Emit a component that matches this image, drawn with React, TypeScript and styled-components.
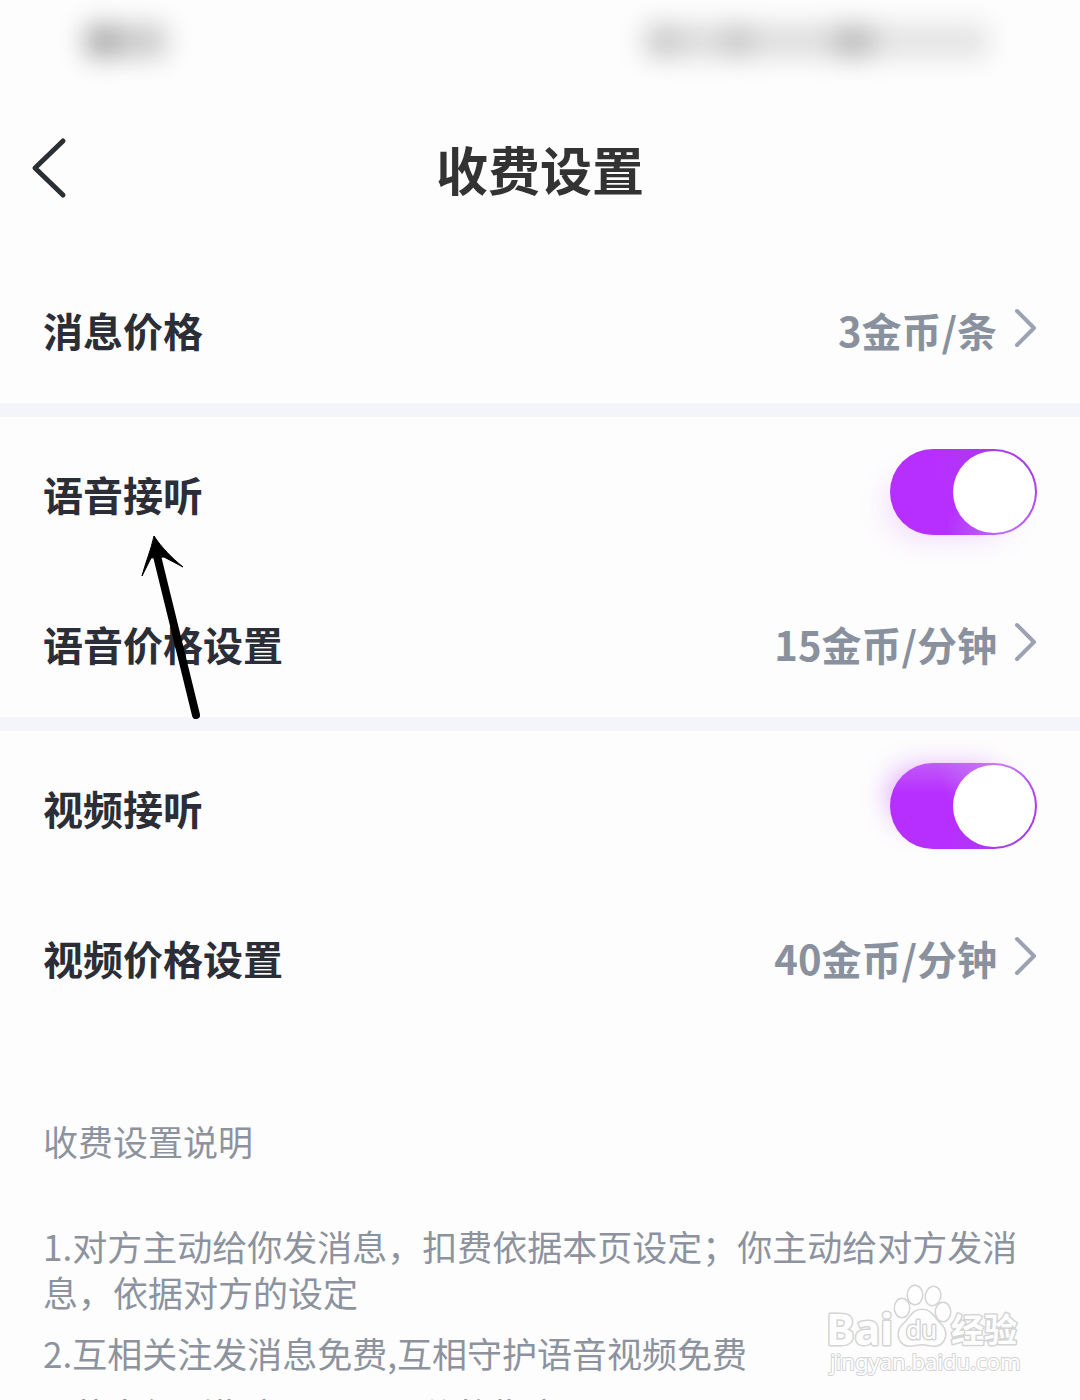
import React, { useState } from 'react';
import styled, { createGlobalStyle } from 'styled-components';

const GlobalStyle = createGlobalStyle`
  * { box-sizing: border-box; }
  body {
    margin: 0;
    background: #fdfdfd;
    font-family: "Noto Sans CJK SC", "Noto Sans", sans-serif;
    color: #2b2e37;
  }
  h1, h2, p { margin: 0; }
`;

const Page = styled.main`
  position: relative;
  height: 100vh;
  overflow: hidden;
`;

const StatusBar = styled.div`
  display: flex;
  justify-content: space-between;
  align-items: center;
  height: 82px;
  padding: 0 92px 0 86px;
`;

const StatusGroup = styled.div`
  display: flex;
  align-items: center;
  filter: blur(13px);
`;

const Smudge = styled.span<{ $w: number; $tone: string }>`
  width: ${p => p.$w}px;
  height: 32px;
  background: ${p => p.$tone};
`;

const TitleBar = styled.header`
  display: grid;
  grid-template-columns: 80px 1fr 80px;
  align-items: center;
  height: 171px;
`;

const BackButton = styled.button`
  display: flex;
  align-items: center;
  height: 80px;
  padding: 0 0 0 30px;
  border: 0;
  background: none;
  color: #2b2e33;
`;

const Title = styled.h1`
  padding-top: 2px;
  font-size: 52px;
  line-height: 72px;
  font-weight: 700;
  text-align: center;
  color: #333333;
`;

const Group = styled.section`
  & + & { border-top: 14px solid #f4f5fa; }
`;

const Row = styled.div`
  display: flex;
  justify-content: space-between;
  align-items: center;
  height: 150px;
  padding: 0 43px;
  font-size: 40px;
  line-height: 56px;
  font-weight: 700;
`;

const RowLabel = styled.label`
  padding-top: 4px;
`;

const RowText = styled.span`
  padding-top: 4px;
`;

const ValueButton = styled.button`
  display: flex;
  align-items: center;
  gap: 16px;
  padding: 0;
  border: 0;
  background: none;
  font: inherit;
  color: #8a919e;
`;

const Switch = styled.input<{ $glow: 'below' | 'above' }>`
  appearance: none;
  display: flex;
  width: 147px;
  height: 86px;
  margin: 0;
  padding: 2px;
  border-radius: 43px;
  background: #d5d8df;
  &::before {
    content: "";
    width: 82px;
    height: 82px;
    border-radius: 50%;
    background: #ffffff;
  }
  &:checked {
    justify-content: flex-end;
    background: ${p => p.$glow === 'below'
      ? 'radial-gradient(circle at 100% 0, #a144dc, transparent 60%), radial-gradient(circle at 85% 100%, #c679f4, transparent 45%), #b62fff'
      : 'radial-gradient(circle at 100% 100%, #a144dc, transparent 50%), radial-gradient(circle at 75% 0, #c679f4, transparent 45%), linear-gradient(#c25af8, transparent 35%), #b62fff'};
    box-shadow: ${p => p.$glow === 'below'
      ? '-14px 14px 32px -14px rgba(182, 47, 255, 0.2)'
      : '-16px -10px 26px -14px rgba(182, 47, 255, 0.4)'};
  }
`;

const Notes = styled.section`
  padding: 87px 43px 0;
  font-size: 35px;
  line-height: 46px;
  color: #8c939e;
`;

const NotesTitle = styled.h2`
  margin-bottom: 59px;
  font-size: 35px;
  line-height: 46px;
  font-weight: 400;
`;

const Note = styled.p`
  margin-bottom: 15px;
`;

const Pointer = styled.svg`
  position: absolute;
  left: 136px;
  top: 530px;
  pointer-events: none;
`;

const Watermark = styled.svg`
  position: absolute;
  right: 54px;
  top: 1280px;
  pointer-events: none;
`;

const Chevron = () => (
  <svg width="24" height="40" viewBox="0 0 24 40" fill="none" aria-hidden="true">
    <path d="M4 3 21 20 4 37" stroke="#9ba3b2" strokeWidth="4" strokeLinecap="round" strokeLinejoin="round" />
  </svg>
);

const PriceRow = ({ label, value }: { label: string; value: string }) => (
  <Row>
    <RowText>{label}</RowText>
    <ValueButton type="button" aria-label={label + ' ' + value}>
      <RowText>{value}</RowText>
      <Chevron />
    </ValueButton>
  </Row>
);

const SwitchRow = ({ id, label, glow }: { id: string; label: string; glow: 'below' | 'above' }) => {
  const [on, setOn] = useState(true);
  return (
    <Row>
      <RowLabel htmlFor={id}>{label}</RowLabel>
      <Switch id={id} type="checkbox" role="switch" $glow={glow} checked={on} onChange={e => setOn(e.target.checked)} />
    </Row>
  );
};

export default function App() {
  return (
    <>
      <GlobalStyle />
      <Page>
        <StatusBar aria-hidden="true">
          <StatusGroup>
            <Smudge $w={32} $tone="#a8a8a8" />
            <Smudge $w={48} $tone="#c8c8c8" />
          </StatusGroup>
          <StatusGroup>
            <Smudge $w={34} $tone="#c8c8c8" />
            <Smudge $w={44} $tone="#dadada" />
            <Smudge $w={28} $tone="#c4c4c4" />
            <Smudge $w={82} $tone="#dcdcdc" />
            <Smudge $w={40} $tone="#bababa" />
            <Smudge $w={114} $tone="#e2e2e2" />
          </StatusGroup>
        </StatusBar>
        <TitleBar>
          <BackButton type="button" aria-label="返回">
            <svg width="38" height="64" viewBox="0 0 38 64" fill="none" aria-hidden="true">
              <path d="M33 5 5 32 33 59" stroke="currentColor" strokeWidth="5" strokeLinecap="round" strokeLinejoin="round" />
            </svg>
          </BackButton>
          <Title>收费设置</Title>
        </TitleBar>
        <Group>
          <PriceRow label="消息价格" value="3金币/条" />
        </Group>
        <Group>
          <SwitchRow id="voice" label="语音接听" glow="below" />
          <PriceRow label="语音价格设置" value="15金币/分钟" />
        </Group>
        <Group>
          <SwitchRow id="video" label="视频接听" glow="above" />
          <PriceRow label="视频价格设置" value="40金币/分钟" />
        </Group>
        <Notes>
          <NotesTitle>收费设置说明</NotesTitle>
          <Note>1.对方主动给你发消息，扣费依据本页设定；你主动给对方发消息，依据对方的设定</Note>
          <Note>2.互相关注发消息免费,互相守护语音视频免费</Note>
          <Note>3.若未得到指定，可以用价格指定</Note>
        </Notes>
        <Pointer width="70" height="196" viewBox="0 0 70 196" aria-hidden="true">
          <path d="M21 26 60 185" stroke="#000" strokeWidth="8" strokeLinecap="round" />
          <path d="M18 6C25 17 36 28 47 37L28 27 15 28 6 46C9 34 15 20 18 6Z" fill="#000" stroke="#000" strokeWidth="1" />
        </Pointer>
        <Watermark width="200" height="104" viewBox="0 0 200 104" aria-label="Baidu 经验">
          <g
            fill="#fefefe"
            stroke="#d4d4d4"
            strokeWidth="3"
            strokeLinejoin="round"
            paintOrder="stroke"
            fontFamily="Noto Sans, Noto Sans CJK SC, sans-serif"
            fontWeight="700"
          >
            <text x="0" y="65" fontSize="43">Bai</text>
            <ellipse cx="76" cy="28" rx="7" ry="9" />
            <ellipse cx="89" cy="15" rx="7" ry="9" />
            <ellipse cx="107" cy="16" rx="7" ry="9" transform="rotate(12 107 16)" />
            <ellipse cx="117" cy="32" rx="7" ry="9" />
            <path d="M96 30c-9 0-12 8-17 13-6 5-8 12-4 18 6 8 14 3 21 3s15 5 21-3c4-6 2-13-4-18-5-5-8-13-17-13Z" />
            <text x="80" y="59" fontSize="25" fontWeight="400">du</text>
            <text x="125" y="62" fontSize="33">经验</text>
            <text x="4" y="90" fontSize="22" fontWeight="400" strokeWidth="2">jingyan.baidu.com</text>
          </g>
        </Watermark>
      </Page>
    </>
  );
}
